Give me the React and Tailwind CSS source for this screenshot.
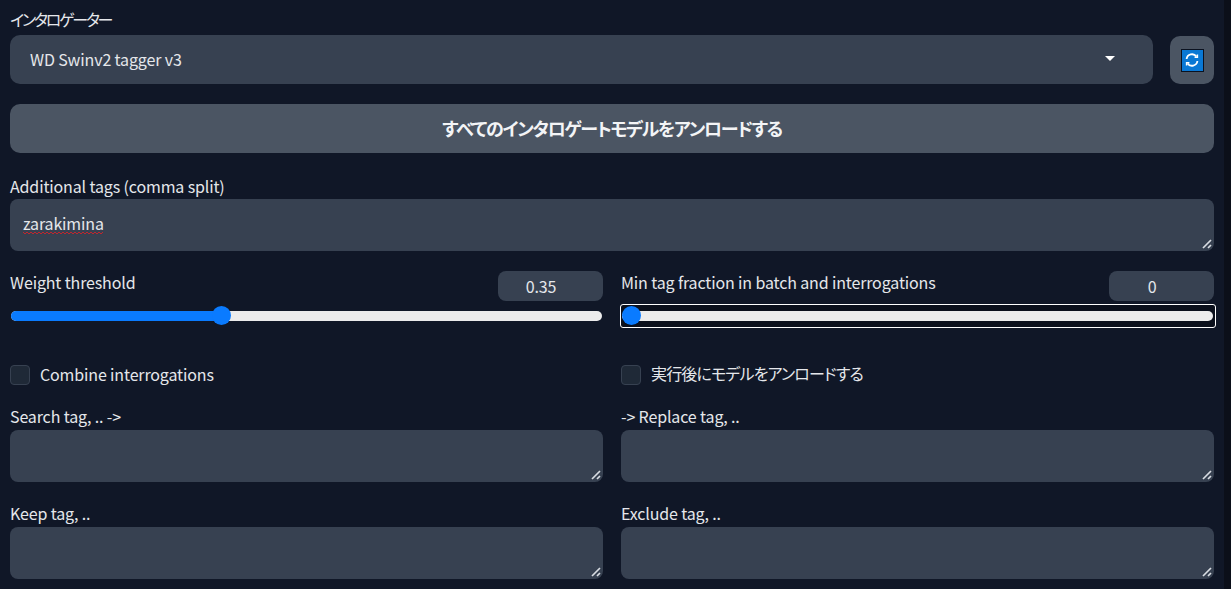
function Label({ children, className = "" }) {
  return <div className={"h-[22px] leading-[20px] text-[16px] text-[#e5e7eb] whitespace-nowrap " + className}>{children}</div>;
}

function Grip() {
  return (
    <svg className="absolute right-[2px] bottom-[2px]" width="10" height="10" viewBox="0 0 10 10">
      <path d="M1 9 L9 1 M6 9 L9 6" stroke="#d8dce2" strokeWidth="1.7" fill="none" />
    </svg>
  );
}

function Area({ children, className = "h-[52px]" }) {
  return (
    <div className={"relative bg-[#374151] rounded-[8px] px-[13px] pb-[4px] flex items-center text-[16px] text-[#e5e7eb] " + className}>
      {children}
      <Grip />
    </div>
  );
}

function Slider({ label, value, pct, focus }) {
  return (
    <div className="flex-1 min-w-0">
      <div className="flex justify-between h-[33px]">
        <Label className="pt-[1px]">{label}</Label>
        <div className="w-[105px] h-[30px] rounded-[8px] bg-[#374151] flex items-center justify-center pr-[19px] pb-[1px] text-[16px] text-[#e5e7eb]">{value}</div>
      </div>
      <div className={"relative h-[24px] flex items-center rounded-[3px] -ml-[1px] -mr-[2px] pl-[1px] pr-[2px] border " + (focus ? "border-white bg-[#0b101c]" : "border-transparent")}>
        <div className="relative w-full h-[10px] rounded-full bg-[#ececec]">
          <div className="h-full rounded-full bg-[#0a7bff]" style={{ width: pct + "%" }} />
          <div className="absolute top-[-5px] w-[19px] h-[19px] rounded-full bg-[#0a7bff]" style={{ left: `calc(${pct}% - 9px + ${focus ? 9 : 0}px)` }} />
        </div>
      </div>
    </div>
  );
}

function Check({ children, className = "" }) {
  return (
    <div className="flex-1 min-w-0 flex items-center h-[20px] gap-[10px]">
      <div className="w-[20px] h-[20px] rounded-[4px] bg-[#1f2937] border border-[#374151]" />
      <span className={"text-[16px] text-[#e5e7eb] whitespace-nowrap " + className}>{children}</span>
    </div>
  );
}

function Field({ label }) {
  return (
    <div className="flex-1 min-w-0">
      <Label className="mb-[2px]">{label}</Label>
      <Area />
    </div>
  );
}

const wave = "M0 1" + Array.from({ length: 20 }, (_, i) => ` L${i * 4 + 2} ${i % 1 === 0 ? 3 : 1} L${i * 4 + 4} 1`).join("");

export default function App() {
  return (
    <div className="w-[1231px] h-[589px] overflow-hidden flex bg-[#0b0f19] font-['Noto_Sans_CJK_JP','Noto_Sans',sans-serif] [font-feature-settings:'palt'] tracking-[-0.14px]">
      <div className="w-[1224px] h-full bg-[#101727] pl-[10px] pr-[10px] pt-[9px]">
        <Label className="mb-[4px] tracking-[-2.2px]">インタロゲーター</Label>
        <div className="flex gap-[17px] items-end">
          <div className="flex-1 h-[49px] rounded-[10px] bg-[#374151] flex items-center justify-between pl-[20px] pr-[38px] pb-[2px] text-[16px] text-[#e5e7eb]">
            <span>WD Swinv2 tagger v3</span>
            <svg width="10" height="5" viewBox="0 0 10 5"><path d="M0 0H10L5 5Z" fill="#fff" /></svg>
          </div>
          <div className="w-[44px] h-[48px] rounded-[10px] bg-[#4b5563] flex items-center justify-center">
            <div className="w-[23px] h-[23px] bg-[#0a78d4] border border-[#0b1220] flex items-center justify-center">
              <svg width="16" height="16" viewBox="0 0 16 16" fill="none" stroke="#fff" strokeWidth="1.8">
                <path d="M2.6 7A5.4 5.4 0 0 1 12.4 4.6" />
                <path d="M13.4 9A5.4 5.4 0 0 1 3.6 11.4" />
                <path d="M13.4 2.4V5.2H10.6" strokeWidth="1.5" />
                <path d="M2.6 13.6V10.8H5.4" strokeWidth="1.5" />
              </svg>
            </div>
          </div>
        </div>
        <div className="mt-[20px] h-[49px] rounded-[10px] bg-[#4b5563] flex items-center justify-center pb-[1px] text-[18px] font-semibold text-[#f3f4f6] tracking-[-1.3px]">
          すべてのインタロゲートモデルをアンロードする
        </div>
        <Label className="mt-[23px] mb-[1px]">Additional tags (comma split)</Label>
        <Area>
          <span className="relative">
            zarakimina
            <svg className="absolute left-0 top-[20px]" width="80" height="4" viewBox="0 0 80 4">
              <path d={wave} fill="none" stroke="#c0262d" strokeWidth="1" />
            </svg>
          </span>
        </Area>
        <div className="flex gap-[18px] mt-[20px]">
          <Slider label="Weight threshold" value="0.35" pct={35.6} />
          <Slider label="Min tag fraction in batch and interrogations" value="0" pct={0} focus />
        </div>
        <div className="flex gap-[18px] mt-[37px]">
          <Check className="-translate-y-px">Combine interrogations</Check>
          <Check className="-translate-y-[2px] tracking-[-0.85px]">実行後にモデルをアンロードする</Check>
        </div>
        <div className="flex gap-[18px] mt-[21px]">
          <Field label="Search tag, .. ->" />
          <Field label="-> Replace tag, .." />
        </div>
        <div className="flex gap-[18px] mt-[21px]">
          <Field label="Keep tag, .." />
          <Field label="Exclude tag, .." />
        </div>
      </div>
      <div className="flex-1 h-full bg-[#0b0f19]" />
    </div>
  );
}
